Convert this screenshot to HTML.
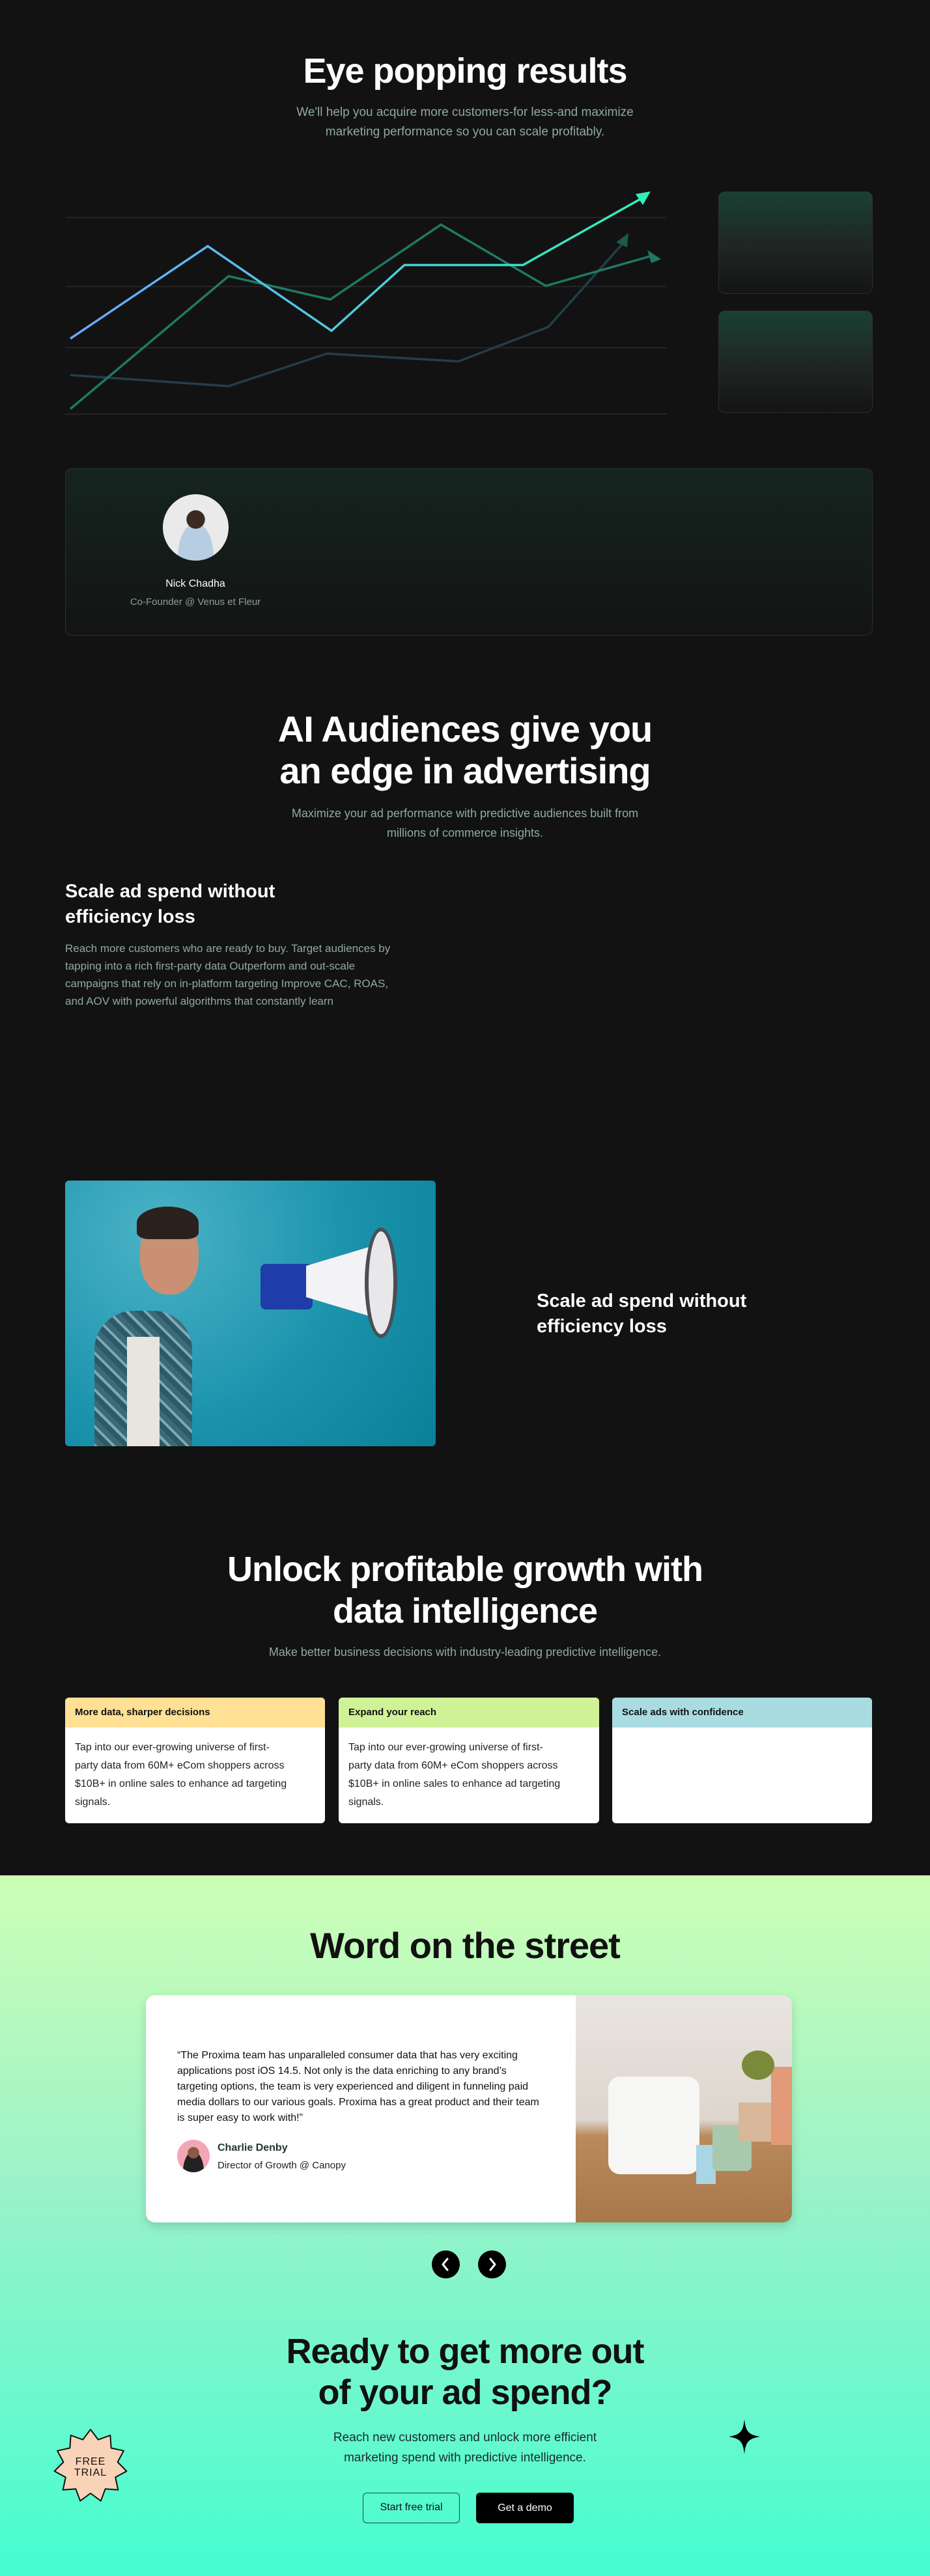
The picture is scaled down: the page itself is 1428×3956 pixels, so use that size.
<!DOCTYPE html>
<html><head><meta charset="utf-8">
<style>
*{margin:0;padding:0;box-sizing:border-box}
body{width:1428px;height:3956px;background:#121212;font-family:"Liberation Sans",sans-serif;position:relative;overflow:hidden}
.a{position:absolute}
.c{left:0;width:1428px;text-align:center}
h1,h2{font-weight:700;letter-spacing:-1px}
.sub{color:#8fa9a6;font-size:19px;line-height:30px}
.box{border:1px solid #2c2f2e;border-radius:10px;background:linear-gradient(#1a4034,#1f2523 55%,#141414)}
.card{background:#fff;border-radius:6px;overflow:hidden}
.card .h{height:46px;padding:0 15px;font-size:15px;font-weight:700;line-height:46px;color:#111}
.card .t{padding:17px 15px;width:360px;font-size:16px;line-height:28px;color:#222}
</style></head><body>

<h1 class="a c" style="top:78px;font-size:54px;color:#fff">Eye popping results</h1>
<div class="a c sub" style="top:158px">We'll help you acquire more customers-for less-and maximize<br>marketing performance so you can scale profitably.</div>

<svg class="a" style="left:0;top:0" width="1100" height="700">
<defs>
<linearGradient id="g1" x1="0" x2="1"><stop offset="0" stop-color="#6aa6ff"/><stop offset="1" stop-color="#2ff0b8"/></linearGradient>
</defs>
<g stroke="#2a2a2a" stroke-width="1.5"><line x1="100" y1="334" x2="1024" y2="334"/><line x1="100" y1="440" x2="1024" y2="440"/><line x1="100" y1="534" x2="1024" y2="534"/><line x1="100" y1="636" x2="1024" y2="636"/></g>
<g fill="none" stroke-width="3.5">
<polyline stroke="#243e4a" points="108,576 351,593 502,543 704,555 842,502 958,372"/>
<polyline stroke="#1f7a63" points="108,628 351,424 507,460 677,345 838,439 1004,392"/>
<polyline stroke="url(#g1)" points="108,520 319,378 509,508 621,407 803,407 988,303"/>
</g>
<polygon fill="#195a48" points="965,358 946,372 963,380"/>
<polygon fill="#1f7a63" points="1015,398 994,384 1000,404"/>
<polygon fill="#2ff0b8" points="999,294 976,298 987,315"/>
</svg>

<div class="a box" style="left:1103px;top:294px;width:237px;height:157px"></div>
<div class="a box" style="left:1103px;top:477px;width:237px;height:157px"></div>

<div class="a" style="left:100px;top:719px;width:1240px;height:257px;border:1px solid #2a2e2d;border-radius:10px;background:linear-gradient(#15241f,#131414)"></div>
<div class="a" style="left:250px;top:759px;width:101px;height:102px;border-radius:50%;background:radial-gradient(circle at 50% 38%,#3b2a22 0 17%,transparent 18%),radial-gradient(ellipse at 50% 95%,#b7cde2 0 38%,transparent 39%),#eaeaea"></div>
<div class="a" style="left:200px;top:888px;width:200px;text-align:center;color:#fff;font-size:16px">Nick Chadha</div>
<div class="a" style="left:150px;top:916px;width:300px;text-align:center;color:#8aa09c;font-size:15px">Co-Founder @ Venus et Fleur</div>

<h2 class="a c" style="top:1088px;font-size:56px;line-height:64px;color:#fff">AI Audiences give you<br>an edge in advertising</h2>
<div class="a c sub" style="top:1234px;font-size:18px">Maximize your ad performance with predictive audiences built from<br>millions of commerce insights.</div>

<div class="a" style="left:100px;top:1350px;color:#fff;font-size:29px;font-weight:700;line-height:39px">Scale ad spend without<br>efficiency loss</div>
<div class="a" style="left:100px;top:1443px;width:500px;color:#8fa9a6;font-size:17px;line-height:27px">Reach more customers who are ready to buy. Target audiences by tapping into a rich first-party data Outperform and out-scale campaigns that rely on in-platform targeting Improve CAC, ROAS, and AOV with powerful algorithms that constantly learn</div>

<div class="a" style="left:100px;top:1813px;width:569px;height:408px;border-radius:6px;overflow:hidden;background:radial-gradient(circle at 25% 20%,#4bb2c6,#1b93ad 55%,#0b7f98)">
 <div class="a" style="left:45px;top:200px;width:150px;height:220px;border-radius:60px 60px 0 0;background:repeating-linear-gradient(45deg,#2d5a6a 0 8px,#7fa9b5 8px 12px,#3c6b78 12px 20px)"></div>
 <div class="a" style="left:95px;top:240px;width:50px;height:170px;background:#e8e4df"></div>
 <div class="a" style="left:115px;top:55px;width:90px;height:120px;border-radius:45%;background:#c99073"></div>
 <div class="a" style="left:110px;top:40px;width:95px;height:50px;border-radius:50% 50% 20% 20%;background:#2b211c"></div>
 <div class="a" style="left:300px;top:128px;width:80px;height:70px;background:#1f3da8;border-radius:8px"></div>
 <div class="a" style="left:370px;top:95px;width:120px;height:120px;clip-path:polygon(0 30%,100% 0,100% 100%,0 70%);background:#f3f3f5"></div>
 <div class="a" style="left:460px;top:72px;width:50px;height:170px;border-radius:50%;background:#e8e8ea;border:6px solid #4a4f55"></div>
</div>
<div class="a" style="left:824px;top:1979px;color:#fff;font-size:29px;font-weight:700;line-height:39px">Scale ad spend without<br>efficiency loss</div>

<h2 class="a c" style="top:2378px;font-size:54px;line-height:64px;color:#fff">Unlock profitable growth with<br>data intelligence</h2>
<div class="a c sub" style="top:2522px;font-size:18px">Make better business decisions with industry-leading predictive intelligence.</div>

<div class="a card" style="left:100px;top:2607px;width:399px;height:193px"><div class="h" style="background:#ffe094">More data, sharper decisions</div><div class="t">Tap into our ever-growing universe of first-party data from 60M+ eCom shoppers across $10B+ in online sales to enhance ad targeting signals.</div></div>
<div class="a card" style="left:520px;top:2607px;width:400px;height:193px"><div class="h" style="background:#cff297">Expand your reach</div><div class="t">Tap into our ever-growing universe of first-party data from 60M+ eCom shoppers across $10B+ in online sales to enhance ad targeting signals.</div></div>
<div class="a card" style="left:940px;top:2607px;width:399px;height:193px"><div class="h" style="background:#a9dce1">Scale ads with confidence</div></div>

<div class="a" style="left:0;top:2880px;width:1428px;height:1076px;background:linear-gradient(#cdffb6,#9af2c9 45%,#45fdd0)"></div>

<h2 class="a c" style="top:2955px;font-size:56px;color:#111">Word on the street</h2>

<div class="a" style="left:224px;top:3064px;width:992px;height:349px;background:#fff;border-radius:14px;overflow:hidden;box-shadow:0 6px 16px rgba(0,0,0,.15)">
 <div class="a" style="left:48px;top:81px;width:570px;font-size:16px;line-height:24px;color:#111">“The Proxima team has unparalleled consumer data that has very exciting applications post iOS 14.5. Not only is the data enriching to any brand’s targeting options, the team is very experienced and diligent in funneling paid media dollars to our various goals. Proxima has a great product and their team is super easy to work with!”</div>
 <div class="a" style="left:48px;top:222px;width:50px;height:50px;border-radius:50%;background:radial-gradient(circle at 50% 40%,#8a5a44 0 22%,transparent 23%),radial-gradient(ellipse at 50% 100%,#222 0 45%,transparent 46%),#f2a7b5"></div>
 <div class="a" style="left:110px;top:226px;font-size:16px;font-weight:700;color:#1f3533">Charlie Denby</div>
 <div class="a" style="left:110px;top:253px;font-size:15px;color:#222">Director of Growth @ Canopy</div>
 <div class="a" style="left:660px;top:0;width:332px;height:349px;background:linear-gradient(#e9e5e0 0,#ddd6ce 55%,#b98a5c 62%,#a8774a)">
  <div class="a" style="left:50px;top:125px;width:140px;height:150px;border-radius:18px;background:#f6f6f4"></div>
  <div class="a" style="left:185px;top:230px;width:30px;height:60px;background:#a9d6e6"></div>
  <div class="a" style="left:210px;top:200px;width:60px;height:70px;border-radius:0 0 8px 8px;background:#a8c9ad"></div>
  <div class="a" style="left:250px;top:165px;width:55px;height:60px;background:#d8b79a"></div>
  <div class="a" style="left:300px;top:110px;width:32px;height:120px;background:#e29a78"></div>
  <div class="a" style="left:255px;top:85px;width:50px;height:45px;border-radius:50%;background:#7b8a3a"></div>
 </div>
</div>

<div class="a" style="left:663px;top:3456px;width:43px;height:43px;border-radius:50%;background:#000"><svg width="43" height="43"><path d="M24 13l-7 8.5 7 8.5" fill="none" stroke="#fff" stroke-width="3" stroke-linecap="round" stroke-linejoin="round"/></svg></div>
<div class="a" style="left:734px;top:3456px;width:43px;height:43px;border-radius:50%;background:#000"><svg width="43" height="43"><path d="M19 13l7 8.5-7 8.5" fill="none" stroke="#fff" stroke-width="3" stroke-linecap="round" stroke-linejoin="round"/></svg></div>

<h2 class="a c" style="top:3580px;font-size:54px;line-height:63px;color:#111">Ready to get more out<br>of your ad spend?</h2>
<div class="a c" style="top:3728px;font-size:19px;line-height:31px;color:#1c2a28">Reach new customers and unlock more efficient<br>marketing spend with predictive intelligence.</div>

<div class="a" style="left:557px;top:3828px;width:149px;height:47px;border:1.5px solid #1a4b40;border-radius:6px;text-align:center;line-height:44px;font-size:16px;color:#111">Start free trial</div>
<div class="a" style="left:731px;top:3828px;width:150px;height:47px;background:#000;border-radius:6px;text-align:center;line-height:47px;font-size:16px;color:#fff">Get a demo</div>

<svg class="a" style="left:79px;top:3727px" width="120" height="120" viewBox="-60 -60 120 120">
<polygon points="0,-56 11.8,-40.3 30.3,-47.1 31.7,-27.5 50.9,-23.3 41.6,-6 55.4,8 38.2,17.4 42.3,36.7 22.7,35.3 15.8,53.7 0,42 -15.8,53.7 -22.7,35.3 -42.3,36.7 -38.2,17.4 -55.4,8 -41.6,-6 -50.9,-23.3 -31.7,-27.5 -30.3,-47.1 -11.8,-40.3" fill="#f9d3b7" stroke="#111" stroke-width="2" stroke-linejoin="round"/>
<text x="0" y="-2" text-anchor="middle" font-family="Liberation Sans,sans-serif" font-size="16" fill="#111" letter-spacing="1">FREE</text>
<text x="0" y="15" text-anchor="middle" font-family="Liberation Sans,sans-serif" font-size="16" fill="#111" letter-spacing="1">TRIAL</text>
</svg>
<svg class="a" style="left:1118px;top:3714px" width="50" height="56" viewBox="-25 -28 50 56"><path d="M0-27C2-8 6-3 24 0 6 3 2 8 0 27-2 8-6 3-24 0-6-3-2-8 0-27Z" fill="#000"/></svg>
</body></html>
